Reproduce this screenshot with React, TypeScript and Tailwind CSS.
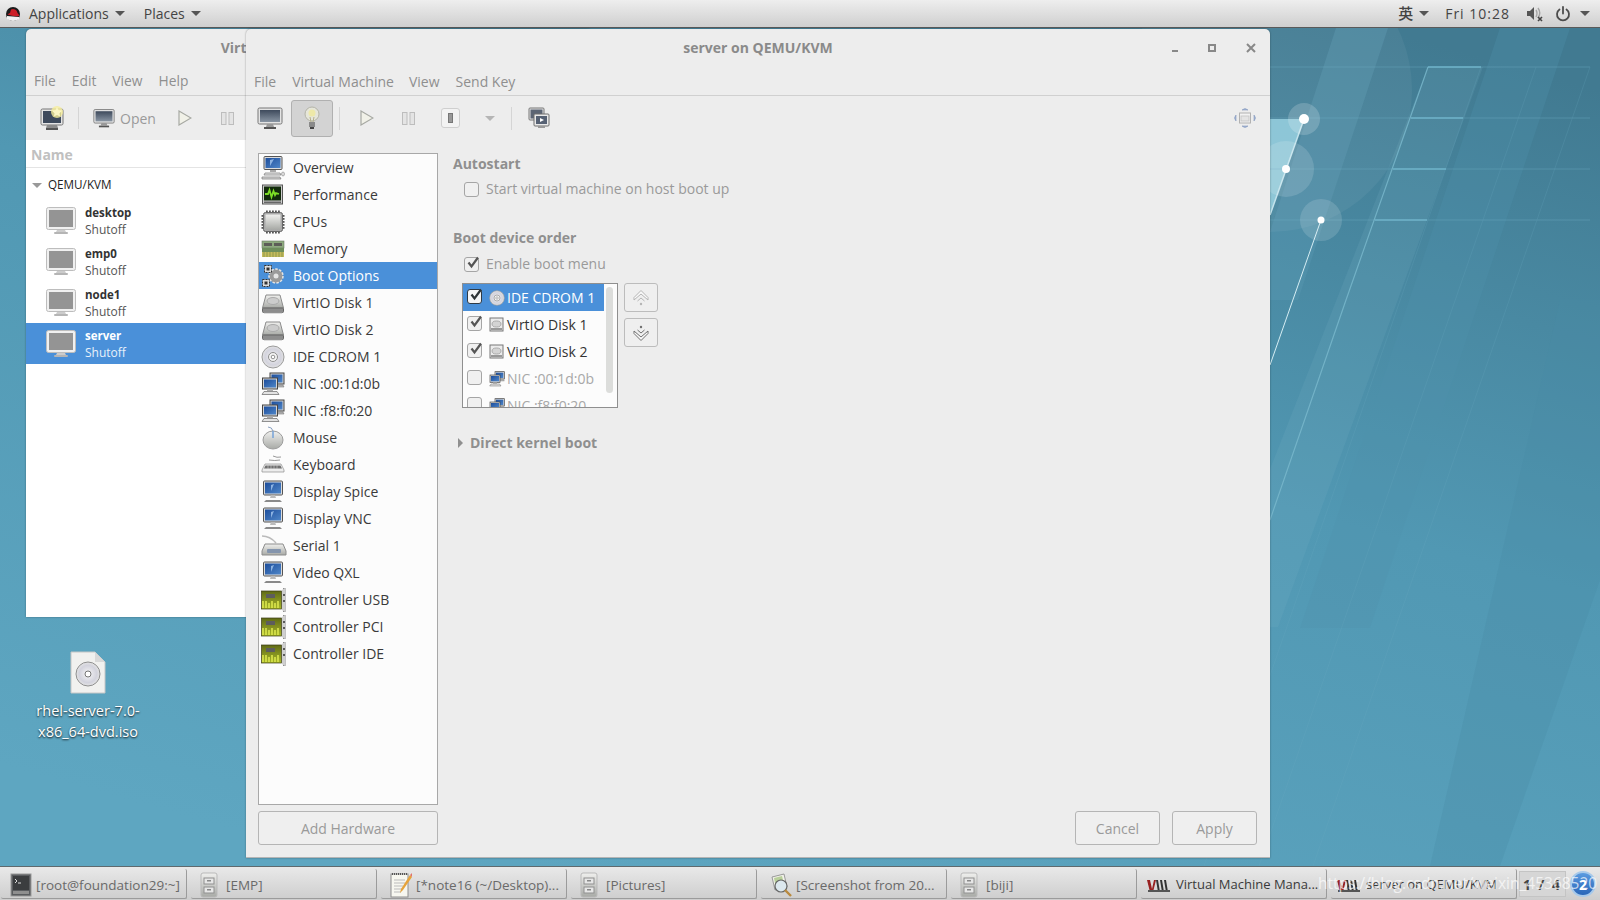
import type { ReactNode } from 'react';

const font = "font-['Open_Sans','Noto_Sans',sans-serif]";

function Defs() {
	return (
		<svg className="absolute w-0 h-0">
			<defs>
				<linearGradient id="scr" x1="0" y1="0" x2="0" y2="1">
					<stop offset="0" stopColor="#3e4a5c" />
					<stop offset="1" stopColor="#8995a3" />
				</linearGradient>
				<linearGradient id="blue" x1="0" y1="0" x2="1" y2="1">
					<stop offset="0" stopColor="#1d4e9c" />
					<stop offset="1" stopColor="#4f86c8" />
				</linearGradient>
				<linearGradient id="metal" x1="0" y1="0" x2="0" y2="1">
					<stop offset="0" stopColor="#f0f0ee" />
					<stop offset="1" stopColor="#a8aaa6" />
				</linearGradient>
				<radialGradient id="cd" cx="0.5" cy="0.5" r="0.6">
					<stop offset="0" stopColor="#f6f6f6" />
					<stop offset="0.6" stopColor="#d3d3dd" />
					<stop offset="1" stopColor="#efefe8" />
				</radialGradient>
				<linearGradient id="green" x1="0" y1="0" x2="0" y2="1">
					<stop offset="0" stopColor="#5f6a16" />
					<stop offset="1" stopColor="#a9b829" />
				</linearGradient>
			</defs>
		</svg>
	);
}

function Caret({ className = 'border-t-[#555]' }: { className?: string }) {
	return <span className={`inline-block w-0 h-0 border-x-[5px] border-x-transparent border-t-[5px] ${className}`} />;
}

function RedHat() {
	return (
		<svg width="16" height="16" viewBox="0 0 16 16">
			<circle cx="8" cy="8" r="7" fill="#1c1c1c" />
			<path d="M2 13 Q8 17 14 13 L14 11 L2 10Z" fill="#f2f2f2" />
			<path d="M2.5 8.5 Q4 7 5 7 L6 3.5 Q8 2.5 10 3.5 Q12 4 12.5 7 Q14.5 9 14 10 Q9 11 2.5 8.5Z" fill="#cc1f27" />
		</svg>
	);
}

function VolumeMuted() {
	return (
		<svg width="17" height="17" viewBox="0 0 17 17">
			<path d="M1 6h3l4-4v13l-4-4H1z" fill="#555" />
			<path d="M10 5q2 3 0 7M12 3q3.5 5 0 10" stroke="#a5a5a5" strokeWidth="1.4" fill="none" />
			<path d="M12 12l4 4M16 12l-4 4" stroke="#444" strokeWidth="1.6" />
		</svg>
	);
}

function Power() {
	return (
		<svg width="16" height="16" viewBox="0 0 16 16" fill="none" stroke="#4c4c4c" strokeWidth="1.8" strokeLinecap="round">
			<path d="M4.5 3.5a6 6 0 1 0 7 0" />
			<path d="M8 1v6.5" />
		</svg>
	);
}

function Monitor({ size = 26 }: { size?: number }) {
	return (
		<svg width={size} height={size} viewBox="0 0 26 24">
			<rect x="1" y="2" width="24" height="16" rx="1.5" fill="#e4e4e4" stroke="#777" />
			<rect x="3" y="4" width="20" height="12" fill="url(#scr)" />
			<path d="M10 18h6l1 3H9z" fill="#999" />
			<rect x="7" y="21" width="12" height="2" fill="#555" />
		</svg>
	);
}

function NewVm() {
	return (
		<svg width="26" height="26" viewBox="0 0 26 26">
			<rect x="1" y="4" width="22" height="16" rx="1.5" fill="#e4e4e4" stroke="#777" />
			<rect x="3" y="6" width="18" height="12" fill="#3e4a5c" />
			<path d="M7 20h10l1 3H6z" fill="#8b8b8b" />
			<rect x="6" y="23" width="12" height="2" fill="#555" />
			<circle cx="17" cy="7" r="6" fill="#f6ee9a" opacity="0.8" />
			<path d="M17 2l1.6 3.3 3.4.5-2.5 2.4.6 3.4-3.1-1.6-3.1 1.6.6-3.4L12 5.8l3.4-.5z" fill="#fbf6c4" />
		</svg>
	);
}

function Play() {
	return (
		<svg width="14" height="16" viewBox="0 0 14 16">
			<path d="M1 1l12 7-12 7z" fill="#f1f1e8" stroke="#a7a9a3" strokeWidth="1.2" />
		</svg>
	);
}

function Pause() {
	return (
		<svg width="13" height="13" viewBox="0 0 13 13" fill="#e4e4e4" stroke="#bdbdbd">
			<rect x="0.5" y="0.5" width="4.5" height="12" />
			<rect x="8" y="0.5" width="4.5" height="12" />
		</svg>
	);
}

function Bulb() {
	return (
		<svg width="18" height="24" viewBox="0 0 18 24">
			<circle cx="9" cy="8" r="7" fill="#e6e6da" stroke="#b4b4a8" />
			<circle cx="9" cy="7" r="3.5" fill="#eee9a8" />
			<path d="M7 11l1 5M11 11l-1 5" stroke="#b5b08a" />
			<rect x="6" y="16" width="6" height="5" fill="#8a8a8a" />
			<rect x="7" y="21" width="4" height="2" fill="#444" />
		</svg>
	);
}

function Screens() {
	return (
		<svg width="22" height="22" viewBox="0 0 22 22">
			<rect x="1" y="1" width="15" height="12" rx="1" fill="#e2e2e2" stroke="#777" />
			<rect x="2.5" y="2.5" width="12" height="9" fill="#5c6574" />
			<rect x="6" y="7" width="15" height="12" rx="1" fill="#e9e9e9" stroke="#6f6f6f" />
			<rect x="8" y="9" width="11" height="8" fill="#566173" />
			<path d="M12 11l4 2-4 2z" fill="#fff" />
			<rect x="10" y="19" width="7" height="2" fill="#999" />
		</svg>
	);
}

function Fullscreen() {
	return (
		<svg width="24" height="22" viewBox="0 0 24 22">
			<rect x="6.5" y="6" width="11" height="10" fill="#f2f2f2" stroke="#b2b2b2" />
			<rect x="8" y="9" width="8" height="5" fill="#e4e4e4" stroke="#c9c9c9" />
			<path d="M9 3q3-3 6 0zM9 19q3 3 6 0zM3 8q-3 3 0 6zM21 8q3 3 0 6z" fill="#9fb4d8" stroke="#8a9cbc" strokeWidth="0.6" />
		</svg>
	);
}

function BlueMonitor() {
	return (
		<svg width="24" height="24" viewBox="0 0 24 24">
			<rect x="2.5" y="1" width="19" height="14" rx="1" fill="#dcdcdc" stroke="#555" />
			<rect x="4" y="2.5" width="16" height="11" fill="url(#blue)" />
			<path d="M10 5l3-1-3 7z" fill="#8db3e2" />
			<path d="M10 15h4l1 3H9z" fill="#bbb" />
			<path d="M5 20h14l2 2H3z" fill="#8a8a8a" />
		</svg>
	);
}

function Overview() {
	return (
		<svg width="24" height="24" viewBox="0 0 24 24">
			<rect x="3" y="0.5" width="18" height="13" rx="1" fill="#dcdcdc" stroke="#555" />
			<rect x="4.5" y="2" width="15" height="10" fill="url(#blue)" />
			<path d="M9 4l4-1-4 7z" fill="#8db3e2" />
			<rect x="9" y="14" width="6" height="2" fill="#aaa" />
			<path d="M4 17h15l1 2H3z" fill="#e6e6e6" stroke="#777" strokeWidth="0.7" />
			<path d="M1 21h18l1 2H1z" fill="#d8d8d8" stroke="#777" strokeWidth="0.7" />
			<ellipse cx="22" cy="18" rx="1.5" ry="2" fill="#ddd" stroke="#777" strokeWidth="0.5" />
		</svg>
	);
}

function Perf() {
	return (
		<svg width="24" height="24" viewBox="0 0 24 24">
			<rect x="1.5" y="2" width="20" height="19" fill="#cfcfcf" stroke="#555" />
			<rect x="3" y="3.5" width="17" height="14" fill="#122a0c" />
			<path d="M4 11h3l1.5-4 2 7 2-6 1.5 4 1-2 3 1" stroke="#7bdc25" strokeWidth="1.8" fill="none" />
			<rect x="3" y="18.5" width="17" height="1.5" fill="#666" />
		</svg>
	);
}

function Cpu() {
	const pins = [5, 8, 11, 14, 17];
	return (
		<svg width="24" height="24" viewBox="0 0 24 24">
			{pins.map((p) => (
				<g key={p} fill="#555">
					<rect x={p} y="0.5" width="1.8" height="3" />
					<rect x={p} y="20.5" width="1.8" height="3" />
					<rect x="0.5" y={p} width="3" height="1.8" />
					<rect x="20.5" y={p} width="3" height="1.8" />
				</g>
			))}
			<rect x="2.5" y="2.5" width="19" height="19" rx="2" fill="#a9a9a9" stroke="#666" />
			<rect x="4.5" y="4.5" width="15" height="15" fill="url(#metal)" />
		</svg>
	);
}

function Ram() {
	return (
		<svg width="24" height="24" viewBox="0 0 24 24">
			<rect x="1" y="4" width="22" height="7" fill="#8daa7e" stroke="#6d7c66" strokeWidth="0.6" />
			<rect x="3" y="6" width="8" height="3" fill="#5d5d58" />
			<rect x="13" y="6" width="8" height="3" fill="#5d5d58" />
			<rect x="1" y="11" width="22" height="4" fill="#6d8e5b" />
			<rect x="1" y="15" width="22" height="5" fill="#c5ba5e" />
			<path d="M3 15v5M6 15v5M9 15v5M12 15v5M15 15v5M18 15v5M21 15v5" stroke="#8c9a4a" />
		</svg>
	);
}

function Gears() {
	return (
		<svg width="24" height="24" viewBox="0 0 24 24">
			<circle cx="15" cy="12" r="7" fill="#9a9a9a" stroke="#e5e5e5" strokeWidth="1.5" strokeDasharray="2.5 1.5" />
			<circle cx="15" cy="12" r="2.5" fill="#e5e5e5" />
			<rect x="3.5" y="1.5" width="7" height="7" fill="#ddd" stroke="#333" strokeDasharray="2 1" />
			<rect x="5.5" y="3.5" width="3" height="3" fill="#333" />
			<rect x="1.5" y="15.5" width="7" height="7" fill="#ddd" stroke="#333" strokeDasharray="2 1" />
			<rect x="3.5" y="17.5" width="3" height="3" fill="#333" />
		</svg>
	);
}

function Disk() {
	return (
		<svg width="24" height="24" viewBox="0 0 24 24">
			<path d="M5 4h14l3.5 13H1.500z" fill="url(#metal)" stroke="#8b8b8b" />
			<ellipse cx="12" cy="10" rx="6" ry="3.5" fill="#ccc" stroke="#aaa" />
			<rect x="1.5" y="17" width="21" height="4.5" rx="1" fill="#8d8d8d" stroke="#666" />
			<rect x="3" y="21.5" width="18" height="1" fill="#bbb" />
		</svg>
	);
}

function Cdrom({ size = 24 }: { size?: number }) {
	return (
		<svg width={size} height={size} viewBox="0 0 24 24">
			<circle cx="12" cy="12" r="11" fill="url(#cd)" stroke="#9b9b9b" />
			<circle cx="12" cy="12" r="4.5" fill="#f4f4f4" stroke="#8d8d8d" />
			<circle cx="12" cy="12" r="1.8" fill="#fff" stroke="#777" strokeWidth="0.8" />
		</svg>
	);
}

function Nic({ size = 24 }: { size?: number }) {
	return (
		<svg width={size} height={size} viewBox="0 0 24 24">
			<rect x="9" y="1" width="14" height="11" fill="#d5d5d5" stroke="#444" />
			<rect x="10.5" y="2.5" width="11" height="8" fill="url(#blue)" />
			<path d="M13 13h9l1 2H13z" fill="#bbb" stroke="#666" strokeWidth="0.5" />
			<rect x="1.5" y="6" width="15" height="11" fill="#d5d5d5" stroke="#444" />
			<rect x="3" y="7.5" width="12" height="8" fill="url(#blue)" />
			<rect x="6" y="17" width="6" height="2" fill="#aaa" />
			<path d="M3 19.5h13l2 3H1z" fill="#e2e2e2" stroke="#666" strokeWidth="0.7" />
		</svg>
	);
}

function Mouse() {
	return (
		<svg width="24" height="24" viewBox="0 0 24 24">
			<path d="M7 1q4 0 5 4" stroke="#8aa0c0" fill="none" />
			<ellipse cx="12" cy="14" rx="10" ry="9" fill="url(#metal)" stroke="#9c9c9c" />
			<path d="M12 5v7" stroke="#74a2d8" strokeWidth="1.5" />
		</svg>
	);
}

function Keyboard() {
	return (
		<svg width="24" height="24" viewBox="0 0 24 24">
			<path d="M12 3q4 2 8 1M8 7q6 1 11 0" stroke="#999" fill="none" />
			<path d="M4 11h16l3 6v2H1v-2z" fill="#ededed" stroke="#8e8e8e" strokeWidth="0.7" />
			<path d="M4.5 12.5h15l1.5 3H3z" fill="#707070" />
			<path d="M7 12v4M10 12v4M13 12v4M16 12v4" stroke="#d2d2d2" strokeWidth="0.6" />
		</svg>
	);
}

function Serial() {
	return (
		<svg width="26" height="24" viewBox="0 0 26 24">
			<path d="M1 2q8 0 14 7" stroke="#bbb" strokeWidth="1.6" fill="none" />
			<path d="M4 10h18l3 7v4H1v-4z" fill="url(#metal)" stroke="#8c8c8c" />
			<rect x="6" y="15" width="14" height="4" rx="1" fill="#8595ad" />
		</svg>
	);
}

function Card() {
	return (
		<svg width="26" height="26" viewBox="0 0 26 26">
			<rect x="0.5" y="4" width="20" height="18" fill="url(#green)" stroke="#3a3a16" strokeWidth="0.7" />
			<rect x="5" y="7" width="9" height="4" fill="#5d5d5d" />
			<path d="M2 14v7M5 14v7M8 16v5M11 14v7M14 16v5M17 14v7" stroke="#dbe64e" strokeWidth="1.6" />
			<path d="M22 1h2.5v24H22z" fill="#8a8a8a" />
			<path d="M24 1l-3 2v20l3 2z" fill="#cfcfcf" />
			<circle cx="23" cy="8" r="1" fill="#333" />
			<circle cx="23" cy="14" r="1" fill="#333" />
		</svg>
	);
}

function Cabinet() {
	return (
		<svg width="18" height="26" viewBox="0 0 18 26">
			<rect x="1" y="1" width="16" height="24" rx="2" fill="url(#metal)" stroke="#b9b9b9" />
			<rect x="4" y="6" width="10" height="6" fill="#e7e7e7" stroke="#8f8f8f" />
			<rect x="4" y="15" width="10" height="6" fill="#e7e7e7" stroke="#8f8f8f" />
			<rect x="7" y="8" width="4" height="1.5" fill="#888" />
			<rect x="7" y="17" width="4" height="1.5" fill="#888" />
		</svg>
	);
}

function Terminal() {
	return (
		<svg width="22" height="24" viewBox="0 0 22 24">
			<rect x="1" y="1" width="20" height="22" fill="#5a5c5f" stroke="#999" />
			<rect x="3" y="3" width="16" height="14" fill="#3b3d3f" />
			<path d="M5 6l2 2-2 2M8 10h3" stroke="#ddd" fill="none" />
			<rect x="3" y="18" width="16" height="3" fill="#8f8f8f" />
		</svg>
	);
}

function Note() {
	return (
		<svg width="22" height="28" viewBox="0 0 22 28">
			<rect x="1" y="3" width="17" height="23" fill="#f7f7f0" stroke="#8e8e8e" />
			<path d="M2 3h15" stroke="#555" strokeWidth="2" strokeDasharray="1 1" />
			<path d="M4 9h11M4 12h11M4 15h9M4 18h8M4 21h7" stroke="#bbb" />
			<path d="M20 4l-9 14-1 4 3-3 9-13z" fill="#e5a33c" />
			<path d="M20 4l2 2 1-2-1-2z" fill="#e2746c" />
		</svg>
	);
}

function Shot() {
	return (
		<svg width="24" height="26" viewBox="0 0 24 26">
			<path d="M2 5l12-3 3 13-12 3z" fill="#f1f1e9" stroke="#999" />
			<path d="M4 6l8-2 1 4-8 3z" fill="#b8cf9a" />
			<circle cx="11" cy="14" r="6" fill="#dce8ee" stroke="#666" strokeWidth="1.2" />
			<path d="M15 18l6 6" stroke="#b98a3f" strokeWidth="2.4" />
		</svg>
	);
}

function VirtLogo() {
	return (
		<svg className="-ml-[3px]" width="24" height="13" viewBox="0 0 24 13">
			<path d="M0 1h3l2 9 2-9h2l-3 12H3z" fill="#922" />
			<path d="M9 1h2l2 12h-2zM13 1h2l2 12h-2zM17 1h2l2 12h-2z" fill="#333" />
			<path d="M1 11h22v2H1z" fill="#555" />
		</svg>
	);
}

function Checkbox({ checked, strong }: { checked?: boolean; strong?: boolean }) {
	return (
		<span
			className={`relative block w-[15px] h-[15px] rounded-[3px] border shrink-0 ${strong ? 'border-[#2f3a45] bg-[#f5f5f5]' : 'border-[#a5a5a5] bg-[#f0f0f0]'}`}
		>
			{checked && (
				<svg className="absolute left-[1px] top-[-3px]" width="15" height="15" viewBox="0 0 15 15">
					<path d="M2.5 7.5l3 4 6.5-9" fill="none" stroke={strong ? '#2e3436' : '#555'} strokeWidth="2.2" />
				</svg>
			)}
		</span>
	);
}

function Wallpaper() {
	return (
		<svg className="absolute inset-0" width="1600" height="900" viewBox="0 0 1600 900">
			<defs>
				<linearGradient id="wall" x1="0.8" y1="0" x2="0.3" y2="1">
					<stop offset="0" stopColor="#417a91" />
					<stop offset="0.45" stopColor="#5198b3" />
					<stop offset="1" stopColor="#5ea6c1" />
				</linearGradient>
			</defs>
			<rect width="1600" height="900" fill="url(#wall)" />
			<path d="M1336 28h52l-90 272h-50z" fill="#5b9bb4" opacity="0.35" />
			<path d="M1428 67h55l-205 560h-70z" fill="#7fb4c6" opacity="0.16" />
			<path d="M1500 28h70l-200 600h-70z" fill="#4f92ac" opacity="0.3" />
			<path d="M1560 300h40v280l-100 286h-70z" fill="#4a8ba6" opacity="0.3" />
			<circle cx="1270" cy="90" r="142" fill="#fff" opacity="0.05" />
			<path d="M1270 119h34l-34 96z" fill="#95cddd" opacity="0.9" />
			<g stroke="#6eadc4" strokeWidth="1" opacity="0.4">
				<path d="M1270 67H1590M1270 118H1590M1270 169H1590M1270 220H1590" />
				<path d="M1481 67L1204 866M1536 67L1259 866M1590 67L1313 866" opacity="0.5" />
			</g>
			<path d="M1428 67h53M1411 118h52M1393 169h53M1375 220h52" stroke="#6fb3c9" strokeWidth="1.5" />
			<path d="M1428 67L1346 300L1270 520" stroke="#7ab9cd" strokeWidth="1.2" opacity="0.8" fill="none" />
			<path d="M1304 119L1270 215" stroke="#c3e3ec" strokeWidth="1.5" />
			<path d="M1321 220L1270 365" stroke="#d5edf3" strokeWidth="1" />
			<circle cx="1304" cy="119" r="16" fill="#fff" opacity="0.18" />
			<circle cx="1286" cy="169" r="28" fill="#fff" opacity="0.14" />
			<circle cx="1321" cy="220" r="21" fill="#fff" opacity="0.14" />
			<circle cx="1304" cy="119" r="5" fill="#fff" />
			<circle cx="1286" cy="169" r="4" fill="#fff" />
			<circle cx="1321" cy="220" r="3.5" fill="#fff" />
		</svg>
	);
}

function TopBar() {
	return (
		<div className="relative flex items-center h-[28px] border-b border-[#5a5a5a] bg-gradient-to-b from-[#eeeeee] to-[#cfcfcf] text-[#444] text-[14px] font-medium pl-[5px] pr-[10px]">
			<RedHat />
			<span className="ml-[8px]">Applications</span>
			<Caret className="ml-[6px] border-t-[#555]" />
			<span className="ml-[19px]">Places</span>
			<Caret className="ml-[6px] border-t-[#555]" />
			<span className="ml-auto text-[15px] font-['Noto_Sans_CJK_SC',sans-serif]">英</span>
			<Caret className="ml-[6px] border-t-[#555]" />
			<span className="ml-[16px] tracking-[1px]">Fri 10:28</span>
			<span className="ml-[16px] flex"><VolumeMuted /></span>
			<span className="ml-[12px] flex"><Power /></span>
			<Caret className="ml-[9px] border-t-[#555]" />
		</div>
	);
}

const vms = ['desktop', 'emp0', 'node1', 'server'];

function ManagerWindow() {
	return (
		<div className="absolute left-[26px] top-[1px] w-[566px] h-[588px] flex flex-col bg-[#ededed] rounded-t-[5px] shadow-[0_0_2px_rgba(0,0,0,0.4)] overflow-hidden">
			<div className="h-[38px] pb-[1px] flex items-center justify-center font-bold text-[14px] text-[#8a8a8a]">Virtual Machine Manager</div>
			<div className="h-[29px] flex items-center gap-[16px] pl-[8px] border-b border-[#d0d0d0] text-[13.8px] text-[#8f8f8f]">
				<span>File</span>
				<span>Edit</span>
				<span>View</span>
				<span>Help</span>
			</div>
			<div className="h-[44px] flex items-center pl-[14px] text-[14px] text-[#9a9a9a]">
				<NewVm />
				<span className="ml-[12px] w-px h-[22px] bg-[#d5d5d5]" />
				<span className="ml-[14px] flex"><Monitor size={22} /></span>
				<span className="ml-[5px]">Open</span>
				<span className="ml-[22px] flex"><Play /></span>
				<span className="ml-[29px] flex"><Pause /></span>
			</div>
			<div className="flex-1 bg-white">
				<div className="h-[28px] flex items-center pl-[5px] pt-[2px] border-b border-[#e4e4e4] font-bold text-[14px] text-[#c0c0c0]">Name</div>
				<div className="h-[32px] pt-[2px] flex items-center pl-[6px] text-[11.7px] text-[#222]">
					<Caret className="border-t-[#999] border-x-[5px]" />
					<span className="ml-[6px]">QEMU/KVM</span>
				</div>
				{vms.map((vm) => {
					const selected = vm === 'server';
					return (
						<div key={vm} className={`h-[41px] flex items-center pl-[20px] ${selected ? 'bg-[#4a90d9] text-white' : 'text-[#333]'}`}>
							<svg width="30" height="28" viewBox="0 0 30 28">
								<rect x="0.5" y="0.5" width="29" height="22" rx="2" fill="#f0f0f0" stroke="#bdbdbd" />
								<rect x="3" y="3" width="24" height="17" fill="#949494" />
								<path d="M11 23h8l1 2H10z" fill="#ccc" />
								<rect x="8" y="25" width="14" height="2" rx="1" fill="#b5b5b5" />
							</svg>
							<div className="ml-[9px] flex flex-col text-[11.5px] leading-[17px]">
								<span className="font-bold">{vm}</span>
								<span className={`text-[12px] ${selected ? 'text-[#e8f0fa]' : 'text-[#555]'}`}>Shutoff</span>
							</div>
						</div>
					);
				})}
			</div>
		</div>
	);
}

const hardware: { name: string; icon: ReactNode }[] = [
	{ name: 'Overview', icon: <Overview /> },
	{ name: 'Performance', icon: <Perf /> },
	{ name: 'CPUs', icon: <Cpu /> },
	{ name: 'Memory', icon: <Ram /> },
	{ name: 'Boot Options', icon: <Gears /> },
	{ name: 'VirtIO Disk 1', icon: <Disk /> },
	{ name: 'VirtIO Disk 2', icon: <Disk /> },
	{ name: 'IDE CDROM 1', icon: <Cdrom /> },
	{ name: 'NIC :00:1d:0b', icon: <Nic /> },
	{ name: 'NIC :f8:f0:20', icon: <Nic /> },
	{ name: 'Mouse', icon: <Mouse /> },
	{ name: 'Keyboard', icon: <Keyboard /> },
	{ name: 'Display Spice', icon: <BlueMonitor /> },
	{ name: 'Display VNC', icon: <BlueMonitor /> },
	{ name: 'Serial 1', icon: <Serial /> },
	{ name: 'Video QXL', icon: <BlueMonitor /> },
	{ name: 'Controller USB', icon: <Card /> },
	{ name: 'Controller PCI', icon: <Card /> },
	{ name: 'Controller IDE', icon: <Card /> },
];

function HardwareList() {
	return (
		<div className="w-[180px] flex-1 bg-[#fcfcfc] border border-[#a8a8a8]">
			{hardware.map((h) => (
				<div
					key={h.name}
					className={`h-[27px] flex items-center text-[14px] ${h.name === 'Boot Options' ? 'bg-[#4a90d9] text-white' : 'text-[#3a3a3a]'}`}
				>
					<span className="w-[34px] pl-[2px] flex justify-start">{h.icon}</span>
					<span>{h.name}</span>
				</div>
			))}
		</div>
	);
}

function BootDisk() {
	return (
		<svg width="15" height="15" viewBox="0 0 15 15">
			<rect x="1" y="1" width="13" height="13" fill="#ececec" stroke="#777" />
			<ellipse cx="7.5" cy="7" rx="4.5" ry="3" fill="#d4d4d4" stroke="#aaa" />
			<rect x="2" y="11" width="11" height="2" fill="#999" />
		</svg>
	);
}

const bootRows: { name: string; icon: ReactNode; checked: boolean; selected?: boolean; dim?: boolean }[] = [
	{ name: 'IDE CDROM 1', icon: <Cdrom size={16} />, checked: true, selected: true },
	{ name: 'VirtIO Disk 1', icon: <BootDisk />, checked: true },
	{ name: 'VirtIO Disk 2', icon: <BootDisk />, checked: true },
	{ name: 'NIC :00:1d:0b', icon: <Nic size={16} />, checked: false, dim: true },
	{ name: 'NIC :f8:f0:20', icon: <Nic size={16} />, checked: false, dim: true },
];

function BootList() {
	return (
		<div className="relative w-[156px] h-[125px] overflow-hidden bg-[#fcfcfc] border border-[#8f8f8f]">
			{bootRows.map((r) => (
				<div
					key={r.name}
					className={`h-[27px] shrink-0 flex items-center pl-[4px] text-[14px] whitespace-nowrap ${r.selected ? 'bg-[#4a90d9] w-[141px] text-white' : r.dim ? 'text-[#a8a8a8]' : 'text-[#333]'}`}
				>
					<span className="mb-[2px]"><Checkbox checked={r.checked} strong={r.selected} /></span>
					<span className="ml-[7px] w-[16px] flex">{r.icon}</span>
					<span className="ml-[2px]">{r.name}</span>
				</div>
			))}
			<div className="absolute right-[4px] top-[3px] w-[7px] h-[106px] rounded-full bg-[#dcdddb]" />
		</div>
	);
}

function MoveButton({ down }: { down?: boolean }) {
	const stroke = down ? '#707070' : '#b5b5b5';
	return (
		<button className="w-[34px] h-[29px] flex items-center justify-center rounded-[3px] border border-[#bcbcbc] bg-[#efefef]">
			<svg width="18" height="18" viewBox="0 0 18 18" fill="#f8f8f8" stroke={stroke} strokeWidth="1">
				{down ? (
					<>
						<path d="M2 7l7 6 7-6 0 2.5-7 7-7-7z" />
						<path d="M5.5 6l3.5 3 3.5-3" fill="none" />
						<circle cx="9" cy="3" r="1.2" fill={stroke} stroke="none" />
					</>
				) : (
					<>
						<path d="M2 11l7-6 7 6 0-2.5-7-7-7 7z" />
						<path d="M5.5 12l3.5-3 3.5 3" fill="none" />
						<circle cx="9" cy="15" r="1.2" fill={stroke} stroke="none" />
					</>
				)}
			</svg>
		</button>
	);
}

function BootOptions() {
	return (
		<div className="flex-1 flex flex-col pl-[15px] pr-[13px]">
			<div className="mt-[1px] font-bold text-[14px] leading-[20px] text-[#8f8f8f]">Autostart</div>
			<div className="mt-[5px] ml-[11px] flex items-center gap-[7px] text-[14px] leading-[20px] text-[#9a9a9a]">
				<Checkbox />
				<span>Start virtual machine on host boot up</span>
			</div>
			<div className="mt-[29px] font-bold text-[14px] leading-[20px] text-[#8f8f8f]">Boot device order</div>
			<div className="mt-[6px] ml-[11px] flex items-center gap-[7px] text-[14px] leading-[20px] text-[#9a9a9a]">
				<Checkbox checked />
				<span>Enable boot menu</span>
			</div>
			<div className="mt-[9px] ml-[9px] flex gap-[6px]">
				<BootList />
				<div className="flex flex-col gap-[6px]">
					<MoveButton />
					<MoveButton down />
				</div>
			</div>
			<div className="mt-[25px] ml-[5px] flex items-center gap-[7px] font-bold text-[14px] leading-[20px] text-[#8f8f8f]">
				<span className="w-0 h-0 border-y-[5px] border-y-transparent border-l-[5px] border-l-[#8f8f8f]" />
				<span>Direct kernel boot</span>
			</div>
			<div className="mt-auto flex justify-end gap-[12px]">
				<button className="w-[85px] h-[34px] rounded-[3px] border border-[#b5b5b5] bg-[#efefef] text-[14px] text-[#9a9a9a]">Cancel</button>
				<button className="w-[85px] h-[34px] rounded-[3px] border border-[#b5b5b5] bg-[#efefef] text-[14px] text-[#9a9a9a]">Apply</button>
			</div>
		</div>
	);
}

function MainWindow() {
	return (
		<div className="absolute left-[246px] top-[1px] w-[1024px] h-[829px] flex flex-col bg-[#ededed] rounded-t-[5px] border-b border-[#b5b5b5] shadow-[0_0_2px_rgba(0,0,0,0.4)]">
			<div className="relative h-[38px] pb-[1px] flex items-center justify-center font-bold text-[14px] text-[#8a8a8a]">
				server on QEMU/KVM
				<div className="absolute right-[14px] top-[14px] flex items-center gap-[30px]">
					<span className="mt-[5px] w-[6px] h-[2px] bg-[#888]" />
					<span className="w-[8px] h-[8px] border-2 border-[#888]" />
					<svg width="10" height="10" viewBox="0 0 10 10">
						<path d="M1 1l8 8M9 1l-8 8" stroke="#888" strokeWidth="2" />
					</svg>
				</div>
			</div>
			<div className="h-[29px] flex items-center gap-[15px] pl-[8px] border-b border-[#d0d0d0] text-[14px] text-[#8f8f8f]">
				<span>File</span>
				<span className="ml-[1px]">Virtual Machine</span>
				<span>View</span>
				<span className="ml-[1px]">Send Key</span>
			</div>
			<div className="h-[44px] flex items-center pl-[11px] pr-[13px]">
				<Monitor />
				<span className="ml-[8px] w-[42px] h-[37px] flex items-center justify-center rounded-[3px] border border-[#b0b0b0] bg-[#d3d3d3]">
					<Bulb />
				</span>
				<span className="ml-[6px] w-px h-[23px] bg-[#d5d5d5]" />
				<span className="ml-[20px] flex"><Play /></span>
				<span className="ml-[28px] flex"><Pause /></span>
				<span className="ml-[26px] w-[19px] h-[20px] flex items-center justify-center rounded-[3px] border border-[#cfcfcf] bg-[#f3f3f3]">
					<span className="w-[5px] h-[10px] bg-[#999] border border-[#777]" />
				</span>
				<Caret className="ml-[25px] border-t-[#b5b5b5]" />
				<span className="ml-[16px] w-px h-[23px] bg-[#d5d5d5]" />
				<span className="ml-[16px] flex"><Screens /></span>
				<span className="ml-auto flex"><Fullscreen /></span>
			</div>
			<div className="flex-1 min-h-0 flex pl-[12px] pt-[13px] pb-[12px]">
				<div className="flex flex-col gap-[6px]">
					<HardwareList />
					<button className="w-[180px] h-[34px] rounded-[3px] border border-[#b5b5b5] bg-[#efefef] text-[14px] text-[#9a9a9a]">Add Hardware</button>
				</div>
				<BootOptions />
			</div>
		</div>
	);
}

const tasks: { label: string; icon: ReactNode; active?: boolean }[] = [
	{ label: '[root@foundation29:~]', icon: <Terminal /> },
	{ label: '[EMP]', icon: <Cabinet /> },
	{ label: '[*note16 (~/Desktop)...', icon: <Note /> },
	{ label: '[Pictures]', icon: <Cabinet /> },
	{ label: '[Screenshot from 20...', icon: <Shot /> },
	{ label: '[biji]', icon: <Cabinet /> },
	{ label: 'Virtual Machine Mana...', icon: <VirtLogo />, active: true },
	{ label: 'server on QEMU/KVM', icon: <VirtLogo />, active: true },
];

function TaskBar() {
	return (
		<div className="relative flex items-center h-[34px] border-t border-[#5f6a6e] bg-gradient-to-b from-[#e9e9e9] to-[#cdcdcd] pl-[1px] pt-[1px]">
			<div className="flex gap-[4px]">
				{tasks.map((t) => (
					<div
						key={t.label}
						className={`w-[186px] h-[30px] flex items-center pl-[9px] pt-[3px] rounded-[2px] border-r border-b border-[#9b9b9b] whitespace-nowrap overflow-hidden font-medium ${t.active ? 'text-[13px] text-[#3a3a3a]' : 'text-[13.5px] text-[#6a6a6a]'}`}
					>
						<span className="w-[26px] flex shrink-0">{t.icon}</span>
						<span>{t.label}</span>
					</div>
				))}
			</div>
			<div className="ml-[2px] w-[47px] h-[26px] flex items-center justify-center bg-[#d6d6d6] border border-[#c4c4c4] text-[14px] font-bold text-[#444] tracking-[2px]">1 / 4</div>
			<div className="ml-[4px] w-[26px] h-[26px] rounded-full flex items-center justify-center bg-gradient-to-b from-[#5b9be0] to-[#2a66b8] border-2 border-[#a7c9ea] text-[14px] font-bold text-white">2</div>
			<span className="absolute left-[1318px] top-[5px] text-[15.5px] text-white/70 whitespace-nowrap">https://blog.csdn.net/weixin_45368520</span>
		</div>
	);
}

export default function App() {
	return (
		<div className={`relative w-[1600px] h-[900px] overflow-hidden flex flex-col ${font}`}>
			<Defs />
			<Wallpaper />
			<TopBar />
			<div className="relative flex-1">
				<ManagerWindow />
				<MainWindow />
				<div className="absolute left-[28px] top-[623px] w-[120px] flex flex-col items-center">
					<svg width="36" height="44" viewBox="0 0 36 44">
						<path d="M1 1h24l10 10v31H1z" fill="#f1f1ef" stroke="#c6c6c6" />
						<path d="M25 1l10 10H25z" fill="#d9d9d9" />
						<circle cx="18" cy="23" r="12" fill="url(#cd)" stroke="#8f8f8f" />
						<circle cx="18" cy="23" r="3" fill="#fff" stroke="#777" />
					</svg>
					<div className="mt-[6px] text-center text-[14.5px] leading-[20.5px] text-white whitespace-nowrap [text-shadow:0_1px_2px_rgba(0,0,0,0.9)]">
						rhel-server-7.0-<br />x86_64-dvd.iso
					</div>
				</div>
			</div>
			<TaskBar />
		</div>
	);
}
